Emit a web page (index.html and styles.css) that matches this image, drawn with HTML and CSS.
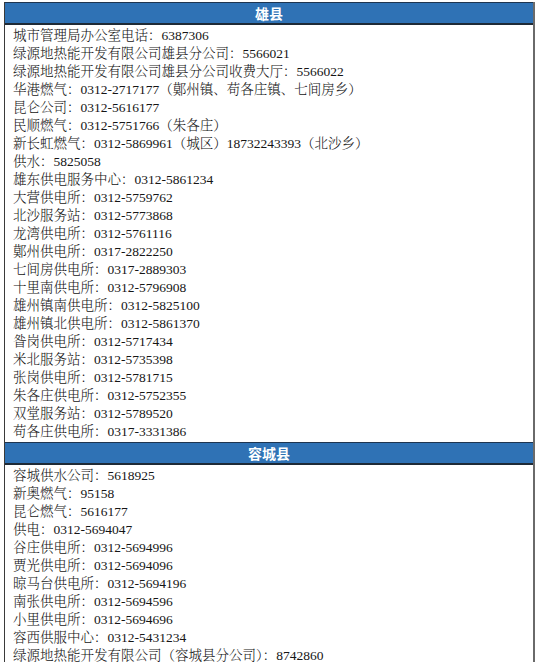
FILE: index.html
```html
<!DOCTYPE html>
<html lang="zh">
<head>
<meta charset="utf-8">
<link rel="stylesheet" href="styles.css">
</head>
<body>
<div class="sheet">
  <div class="head">雄县</div>
  <div class="rows">
    <div class="row">城市管理局办公室电话：6387306</div>
    <div class="row">绿源地热能开发有限公司雄县分公司：5566021</div>
    <div class="row">绿源地热能开发有限公司雄县分公司收费大厅：5566022</div>
    <div class="row">华港燃气：0312-2717177（鄚州镇、苟各庄镇、七间房乡）</div>
    <div class="row">昆仑公司：0312-5616177</div>
    <div class="row">民顺燃气：0312-5751766（朱各庄）</div>
    <div class="row">新长虹燃气：0312-5869961（城区）18732243393（北沙乡）</div>
    <div class="row">供水：5825058</div>
    <div class="row">雄东供电服务中心：0312-5861234</div>
    <div class="row">大营供电所：0312-5759762</div>
    <div class="row">北沙服务站：0312-5773868</div>
    <div class="row">龙湾供电所：0312-5761116</div>
    <div class="row">鄚州供电所：0317-2822250</div>
    <div class="row">七间房供电所：0317-2889303</div>
    <div class="row">十里南供电所：0312-5796908</div>
    <div class="row">雄州镇南供电所：0312-5825100</div>
    <div class="row">雄州镇北供电所：0312-5861370</div>
    <div class="row">昝岗供电所：0312-5717434</div>
    <div class="row">米北服务站：0312-5735398</div>
    <div class="row">张岗供电所：0312-5781715</div>
    <div class="row">朱各庄供电所：0312-5752355</div>
    <div class="row">双堂服务站：0312-5789520</div>
    <div class="row">苟各庄供电所：0317-3331386</div>
  </div>
  <div class="head">容城县</div>
  <div class="rows">
    <div class="row">容城供水公司：5618925</div>
    <div class="row">新奥燃气：95158</div>
    <div class="row">昆仑燃气：5616177</div>
    <div class="row">供电：0312-5694047</div>
    <div class="row">谷庄供电所：0312-5694996</div>
    <div class="row">贾光供电所：0312-5694096</div>
    <div class="row">晾马台供电所：0312-5694196</div>
    <div class="row">南张供电所：0312-5694596</div>
    <div class="row">小里供电所：0312-5694696</div>
    <div class="row">容西供服中心：0312-5431234</div>
    <div class="row">绿源地热能开发有限公司（容城县分公司）：8742860</div>
  </div>
</div>
</body>
</html>
```
FILE: styles.css
```css
html, body {
  margin: 0;
  padding: 0;
  background: #ffffff;
}
.sheet {
  margin: 2px 0 0 4px;
  width: 531px;
  border-left: 1px solid #3a3a3a;
  border-right: 2px solid #6a6a6a;
  box-sizing: border-box;
}
.head {
  height: 23px;
  box-sizing: border-box;
  background: #2f72b5;
  border-top: 1px solid #1e3550;
  border-bottom: 2px solid #1e2a36;
  color: #ffffff;
  font-family: "Noto Sans CJK SC", sans-serif;
  font-weight: 700;
  font-size: 14px;
  line-height: 20px;
  text-align: center;
}
.rows {
  padding: 2px 0 1px 8px;
}
.row {
  height: 18px;
  line-height: 18px;
  font-family: "Liberation Serif", "Noto Serif CJK SC", "Noto Sans CJK SC", serif;
  font-weight: 300;
  font-size: 13.5px;
  color: #151515;
  white-space: nowrap;
}
```
